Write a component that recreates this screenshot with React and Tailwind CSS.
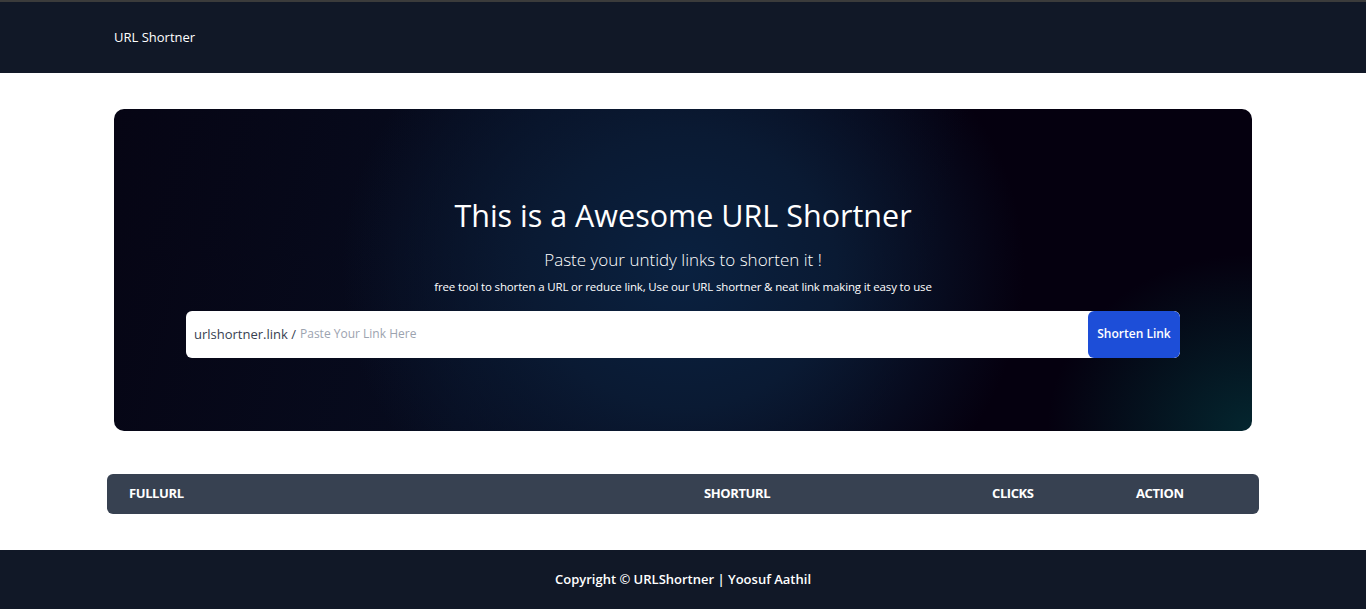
import { useState } from "react";

const columns = [
  { label: "FULLURL", className: "w-[575px]" },
  { label: "SHORTURL", className: "w-[288px]" },
  { label: "CLICKS", className: "w-[144px]" },
  { label: "ACTION", className: "" },
];

export default function App() {
  const [link, setLink] = useState("");

  return (
    <div className="min-h-[609px] flex flex-col bg-white font-['Open_Sans','Noto_Sans',sans-serif]">
      {/* Navbar */}
      <nav className="h-[73px] bg-[#111827] border-t-2 border-[#3b3b3b] flex items-center">
        <div className="w-[1138px] mx-auto text-[13px] text-white">URL Shortner</div>
      </nav>

      <main className="flex-1 pt-[36px] pb-[36px]">
        {/* Hero */}
        <section className="w-[1138px] h-[322px] mx-auto rounded-[10px] bg-[radial-gradient(ellipse_30%_95%_at_50%_50%,#0a2140_0%,#0a1a33_45%,transparent_100%),radial-gradient(ellipse_18%_55%_at_100%_100%,#04262f_0%,transparent_100%),linear-gradient(105deg,#060514_0%,#070c1f_35%,#05000f_70%,#05000f_100%)] flex flex-col items-center pt-[86px]">
          <h1 className="text-[30.5px] leading-[40px] text-white">
            This is a Awesome URL Shortner
          </h1>
          <p className="mt-[12px] text-[17px] font-light text-white">
            Paste your untidy links to shorten it !
          </p>
          <p className="mt-[5px] text-[11.5px] text-white tracking-[-0.15px]">
            free tool to shorten a URL or reduce link, Use our URL shortner &amp; neat link making it easy to use
          </p>
          <form
            onSubmit={(e) => e.preventDefault()}
            className="mt-[16px] w-[994px] h-[47px] flex bg-white rounded-md overflow-hidden"
          >
            <div className="flex-1 flex items-center pl-[8px] text-[13px]">
              <span className="text-[#374151]">urlshortner.link /</span>
              <input
                value={link}
                onChange={(e) => setLink(e.target.value)}
                placeholder="Paste Your Link Here"
                className="flex-1 ml-[4px] outline-none text-[12px] text-gray-700 placeholder:text-[#9ca3af]"
              />
            </div>
            <button
              type="submit"
              className="w-[92px] bg-[#1d4ed8] rounded-md text-white text-[12px] font-semibold"
            >
              Shorten Link
            </button>
          </form>
        </section>

        {/* Table header */}
        <div className="mt-[43px] w-[1152px] h-[40px] mx-auto bg-[#374151] rounded-md flex items-center pl-[22px] text-[13px] font-bold text-white tracking-[-0.4px]">
          {columns.map((c) => (
            <div key={c.label} className={c.className}>
              {c.label}
            </div>
          ))}
        </div>
      </main>

      {/* Footer */}
      <footer className="h-[59px] bg-[#111827] flex items-center justify-center text-[13px] font-semibold text-white">
        Copyright © URLShortner | Yoosuf Aathil
      </footer>
    </div>
  );
}
